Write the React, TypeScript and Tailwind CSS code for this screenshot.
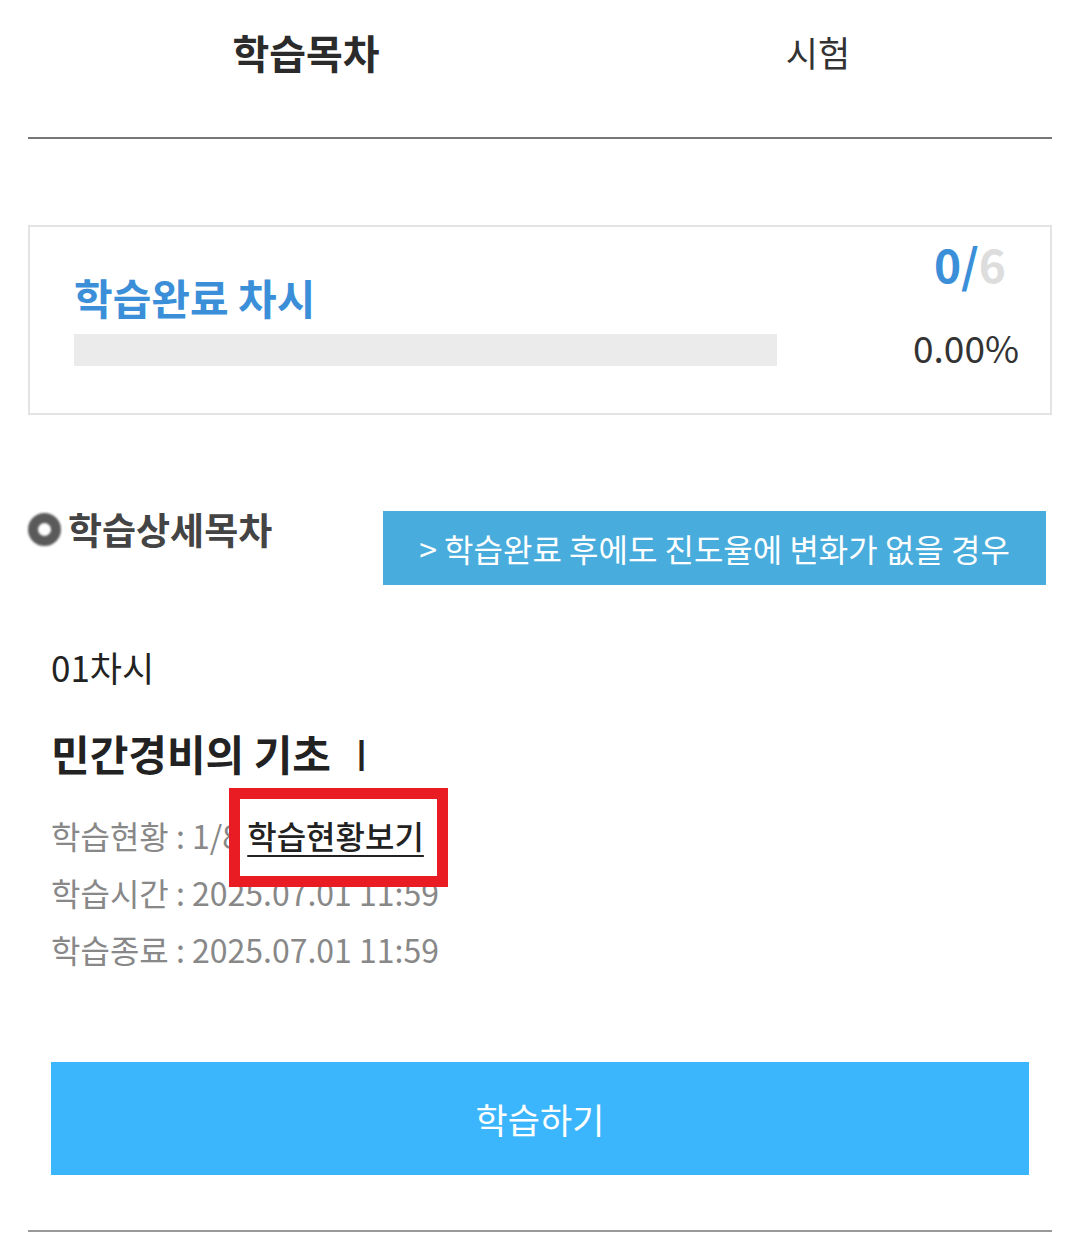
import React from "react";

const KR = { fontFamily: '"Noto Sans CJK KR", "Noto Sans", sans-serif' };

export default function App() {
  return (
    <div className="w-[1080px] min-h-[1251px] bg-white" style={KR}>
      <div className="mx-[28px]">
        {/* Tabs */}
        <div className="h-[139px] border-b-2 border-[#777]">
          <div className="ml-[22px] grid grid-cols-[512px_512px] h-[104px] items-center">
            <div className="text-center text-[40px] font-bold leading-[48px] text-[#2b2b2b]">학습목차</div>
            <div className="text-center text-[35px] leading-[48px] text-[#333]">시험</div>
          </div>
        </div>

        {/* Progress card */}
        <div className="mt-[86px] h-[190px] border-2 border-[#e4e4e4] flex pl-[44px] pr-[31px]">
          <div className="w-[703px] pt-[45px]">
            <div className="text-[42px] font-bold leading-[50px] text-[#3b8fd8]">학습완료 차시</div>
            <div className="mt-[12px] h-[32px] bg-[#ebebeb]"></div>
          </div>
          <div className="flex-1 flex flex-col items-end">
            <div className="mt-[12px] mr-[13px] text-[46px] font-bold leading-[48px]">
              <span className="text-[#3b8fd8]">0/</span>
              <span className="text-[#dddddd]">6</span>
            </div>
            <div className="mt-[40px] text-[37px] leading-[40px] text-[#333]">0.00%</div>
          </div>
        </div>

        {/* Section heading */}
        <div className="mt-[96px] flex justify-between items-start">
          <div className="flex items-center h-[36px] gap-[7px]">
            <div className="w-[33px] h-[33px] rounded-full border-[10px] border-[#5a5a5a] blur-[1px]"></div>
            <div className="text-[37px] font-bold leading-[40px] text-[#444]">학습상세목차</div>
          </div>
          <div className="mr-[6px] w-[663px] h-[74px] bg-[#48acdc] flex items-center justify-center text-white text-[32px] leading-[40px]">
            &gt; 학습완료 후에도 진도율에 변화가 없을 경우
          </div>
        </div>

        {/* Detail */}
        <div className="px-[23px]">
          <div className="mt-[62px] text-[35px] leading-[40px] text-[#222]">01차시</div>
          <div className="mt-[42px] text-[42px] font-bold leading-[48px] text-[#222]">
            민간경비의 기초 <span className="font-normal">Ⅰ</span>
          </div>
          <div className="mt-[30px] text-[32px] leading-[57px] text-[#888]">
            <div>
              학습현황 : 1/8{" "}
              <span className="relative inline-block">
                <span className="absolute left-[-18px] top-[-19px] w-[219px] h-[99px] border-[11px] border-[#e91c24] bg-white"></span>
                <span className="relative text-[#222] font-medium underline decoration-[2px] underline-offset-[6px]">학습현황보기</span>
              </span>
            </div>
            <div>학습시간 : 2025.07.01 11:59</div>
            <div>학습종료 : 2025.07.01 11:59</div>
          </div>

          <div className="mt-[84px] h-[113px] bg-[#3bb6fc] flex items-center justify-center text-white text-[35px] leading-[40px]">
            학습하기
          </div>
        </div>

        <div className="mt-[55px] border-b-2 border-[#999]"></div>
      </div>
    </div>
  );
}
